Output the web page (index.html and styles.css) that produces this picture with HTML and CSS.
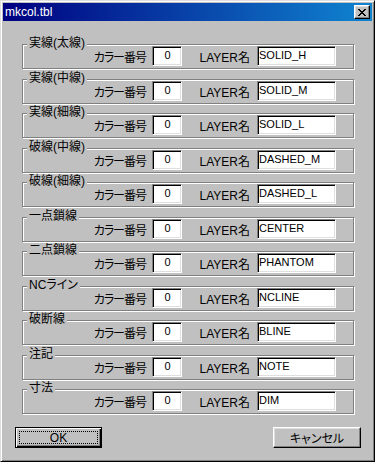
FILE: index.html
```html
<!DOCTYPE HTML>
<html>
<head>
    <title>mkcol.tbl</title>
    <link rel="stylesheet" href="styles.css">
</head>
<body>
    <div class="win">
        <div class="titlebar">
            <span class="ttl">mkcol.tbl</span>
            <div class="closebtn">
                <svg width="8" height="7" viewBox="0 0 8 7" shape-rendering="crispEdges"><path fill="#000" d="M0 0h2v1H0zM6 0h2v1H6zM1 1h2v1H1zM5 1h2v1H5zM2 2h4v1H2zM3 3h2v1H3zM2 4h4v1H2zM1 5h2v1H1zM5 5h2v1H5zM0 6h2v1H0zM6 6h2v1H6z"/></svg>
            </div>
        </div>
        <div class="content">
            <div class="grp">
                <div class="cap">実線(太線)</div>
                <div class="row"><span class="lbl1">カラー番号</span><input class="num" value="0"><span class="lbl2">LAYER名</span><input class="name" value="SOLID_H"></div>
            </div>
            <div class="grp">
                <div class="cap">実線(中線)</div>
                <div class="row"><span class="lbl1">カラー番号</span><input class="num" value="0"><span class="lbl2">LAYER名</span><input class="name" value="SOLID_M"></div>
            </div>
            <div class="grp">
                <div class="cap">実線(細線)</div>
                <div class="row"><span class="lbl1">カラー番号</span><input class="num" value="0"><span class="lbl2">LAYER名</span><input class="name" value="SOLID_L"></div>
            </div>
            <div class="grp">
                <div class="cap">破線(中線)</div>
                <div class="row"><span class="lbl1">カラー番号</span><input class="num" value="0"><span class="lbl2">LAYER名</span><input class="name" value="DASHED_M"></div>
            </div>
            <div class="grp">
                <div class="cap">破線(細線)</div>
                <div class="row"><span class="lbl1">カラー番号</span><input class="num" value="0"><span class="lbl2">LAYER名</span><input class="name" value="DASHED_L"></div>
            </div>
            <div class="grp">
                <div class="cap">一点鎖線</div>
                <div class="row"><span class="lbl1">カラー番号</span><input class="num" value="0"><span class="lbl2">LAYER名</span><input class="name" value="CENTER"></div>
            </div>
            <div class="grp">
                <div class="cap">二点鎖線</div>
                <div class="row"><span class="lbl1">カラー番号</span><input class="num" value="0"><span class="lbl2">LAYER名</span><input class="name" value="PHANTOM"></div>
            </div>
            <div class="grp">
                <div class="cap">NCライン</div>
                <div class="row"><span class="lbl1">カラー番号</span><input class="num" value="0"><span class="lbl2">LAYER名</span><input class="name" value="NCLINE"></div>
            </div>
            <div class="grp">
                <div class="cap">破断線</div>
                <div class="row"><span class="lbl1">カラー番号</span><input class="num" value="0"><span class="lbl2">LAYER名</span><input class="name" value="BLINE"></div>
            </div>
            <div class="grp">
                <div class="cap">注記</div>
                <div class="row"><span class="lbl1">カラー番号</span><input class="num" value="0"><span class="lbl2">LAYER名</span><input class="name" value="NOTE"></div>
            </div>
            <div class="grp">
                <div class="cap">寸法</div>
                <div class="row"><span class="lbl1">カラー番号</span><input class="num" value="0"><span class="lbl2">LAYER名</span><input class="name" value="DIM"></div>
            </div>
        </div>
        <div class="buttons">
            <div class="btn def"><span class="focus">OK</span></div>
            <div class="btn cancel">キャンセル</div>
        </div>
    </div>
</body>
</html>
```

FILE: styles.css
```css
body {
    margin: 0;
    background: #c0c0c0;
    font-family: "Liberation Sans", "Noto Sans CJK JP", sans-serif;
    font-size: 12px;
    font-feature-settings: "palt";
    color: #000;
}

.win {
    box-sizing: border-box;
    width: 375px;
    height: 462px;
    padding: 2px;
    background: #c0c0c0;
    border: 1px solid;
    border-color: #dfdfdf #000 #000 #dfdfdf;
    box-shadow: inset 1px 1px #fff, inset -1px -1px #808080;
}

.titlebar {
    height: 18px;
    display: flex;
    align-items: center;
    justify-content: space-between;
    padding-left: 2px;
    background: linear-gradient(to right, #000080, #1084d0);
}

.ttl {
    color: #fff;
    font-size: 12px;
}

.closebtn {
    box-sizing: border-box;
    width: 16px;
    height: 14px;
    margin-right: 2px;
    display: flex;
    align-items: center;
    justify-content: center;
    background: #c0c0c0;
    border: 1px solid;
    border-color: #fff #000 #000 #fff;
    box-shadow: inset -1px -1px #808080, inset 1px 1px #dfdfdf;
}

.content {
    padding-top: 23px;
}

.grp {
    box-sizing: border-box;
    width: 332px;
    height: 25px;
    margin-left: 19px;
    border: 1px solid #808080;
    box-shadow: inset 1px 1px #fff, 1px 1px #fff;
    display: flex;
    flex-direction: column;
    align-items: flex-start;
}

.grp:nth-child(even) {
    margin-top: 10px;
}

.grp:nth-child(odd) {
    margin-top: 9px;
}

.grp:first-child {
    margin-top: 0;
}

.cap {
    height: 14px;
    line-height: 14px;
    margin: -9px 0 0 4px;
    padding: 0 2px;
    background: #c0c0c0;
    white-space: nowrap;
}

.row {
    align-self: stretch;
    height: 20px;
    margin-top: -4px;
    padding-right: 17px;
    display: flex;
    align-items: center;
}

.lbl1 {
    flex: 1;
    text-align: right;
    margin-right: 6px;
    letter-spacing: -1px;
}

.lbl2 {
    width: 68px;
    text-align: right;
    margin-right: 7px;
}

input {
    box-sizing: border-box;
    height: 20px;
    margin: 0;
    padding: 0 0 3px 1px;
    background: #fff;
    border: 1px solid;
    border-color: #808080 #fff #fff #808080;
    box-shadow: inset 1px 1px #000, inset -1px -1px #dfdfdf;
    font-family: "Liberation Sans", sans-serif;
    font-size: 11px;
    color: #000;
    outline: none;
}

.num {
    width: 30px;
    text-align: center;
}

.name {
    width: 79px;
}

.buttons {
    display: flex;
    justify-content: space-between;
    margin-top: 13px;
    padding: 0 11px 0 12px;
}

.btn {
    box-sizing: border-box;
    height: 21px;
    display: flex;
    align-items: center;
    justify-content: center;
    background: #c0c0c0;
}

.def {
    width: 87px;
    padding: 3px;
    border: 1px solid #000;
    box-shadow: inset 1px 1px #fff, inset -1px -1px #000, inset -2px -2px #808080;
}

.focus {
    box-sizing: border-box;
    align-self: stretch;
    flex: 1;
    display: flex;
    align-items: center;
    justify-content: center;
    border: 1px dotted #000;
}

.cancel {
    width: 88px;
    border: 1px solid;
    border-color: #fff #000 #000 #fff;
    box-shadow: inset -1px -1px #808080, inset 1px 1px #dfdfdf;
}
```
